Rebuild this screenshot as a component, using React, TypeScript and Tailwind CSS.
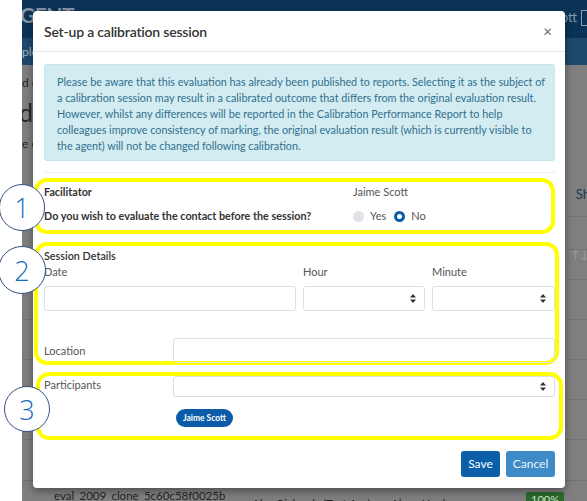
import { ReactNode } from 'react';

function Caret() {
  return (
    <svg width="6" height="9" viewBox="0 0 6 9" className="shrink-0">
      <path d="M3 0 L6 3.5 H0 Z M3 9 L6 5.5 H0 Z" fill="#333" />
    </svg>
  );
}

function SelectBox({ className = '' }: { className?: string }) {
  return (
    <div className={`flex items-center justify-end pr-[8px] bg-white border border-[#dcdfe3] rounded-[3px] ${className}`}>
      <Caret />
    </div>
  );
}

function Marker({ n, className }: { n: string; className: string }) {
  return (
    <div
      className={`absolute flex items-center justify-center rounded-full bg-white border border-[#34507e] text-[#1a6cc4] text-[27px] leading-none ${className}`}
      style={{ fontFamily: '"Open Sans", sans-serif', fontWeight: 300 }}
    >
      {n}
    </div>
  );
}

function Highlight({ children, className = '' }: { children: ReactNode; className?: string }) {
  return <div className={`shrink-0 border-[4px] border-[#ffff00] rounded-[13px] ${className}`}>{children}</div>;
}

const alertLines = [
  'Please be aware that this evaluation has already been published to reports. Selecting it as the subject of',
  'a calibration session may result in a calibrated outcome that differs from the original evaluation result.',
  'However, whilst any differences will be reported in the Calibration Performance Report to help',
  'colleagues improve consistency of marking, the original evaluation result (which is currently visible to',
  'the agent) will not be changed following calibration.',
];

function Background() {
  return (
    <div
      className="flex-1 flex flex-col bg-[#7f7f7f] overflow-hidden"
      style={{ fontFamily: 'Lato, "Open Sans", sans-serif' }}
    >
      {/* top navbar */}
      <div className="h-[38px] shrink-0 bg-[#0b3357] flex items-start justify-between">
        <div className="flex items-baseline gap-[8px] -mt-[1px] -ml-[2px]">
          <span className="text-[21px] font-bold text-[#8595a6] tracking-tight">GENT</span>
          <span className="text-[15px] text-[#6f8296]">Quality</span>
        </div>
        <div className="flex items-center gap-[4px] mt-[8px]">
          <span className="text-[13px] text-[#8e9db0]">ott</span>
          <span className="w-[6px] h-[16px] border border-[#8e9db0] border-r-0" />
        </div>
      </div>
      {/* sub bar */}
      <div className="h-[27px] shrink-0 bg-[#1e496d] flex items-center">
        <span className="text-[12px] text-[#aab6c3]">ple</span>
      </div>
      {/* content */}
      <div className="relative h-[152px] shrink-0 border-b border-[#727272] text-[#262626]">
        <div className="text-[12px] mt-[9px]">d e</div>
        <div className="text-[25px] leading-none mt-[8px] -ml-[3px]">d</div>
        <div className="text-[12px] mt-[10px]">e c</div>
        <div className="absolute right-[-3px] top-[120px] text-[13px] text-[#1b3a58]">Sh</div>
      </div>
      <div className="h-[33px] shrink-0 border-b border-[#727272]" />
      <div className="h-[30px] shrink-0 border-b border-[#727272] flex justify-end items-start">
        <span className="text-[12px] text-[#9a9a9a] mr-[-2px] -mt-[4px]">↑↓</span>
      </div>
      <div className="h-[40px] shrink-0 border-b border-[#727272]" />
      <div className="h-[40px] shrink-0 border-b border-[#727272]" />
      <div className="h-[40px] shrink-0 border-b border-[#727272]" />
      <div className="h-[40px] shrink-0 border-b border-[#727272]" />
      <div className="h-[41px] shrink-0 border-b border-[#727272]" />
      <div className="flex items-start text-[11.5px] text-[#262626] pt-[6px] shrink-0">
        <span className="ml-[32px] w-[198px] whitespace-nowrap">eval_2009_clone_5c60c58f0025b</span>
        <span className="mt-[8px] w-[139px] whitespace-nowrap">Alex Richards (Test Acc)</span>
        <span className="mt-[8px] w-[135px] whitespace-nowrap">Alaya Hughes</span>
        <span className="mt-[5px] bg-[#2c6a2c] text-[#cfe3cf] text-[11px] px-[5px] rounded-[2px]">100%</span>
      </div>
    </div>
  );
}

function Modal() {
  return (
    <div
      className="absolute left-[33px] top-[11px] w-[532px] h-[477px] bg-white rounded-[4px] shadow-[0_3px_9px_rgba(0,0,0,0.4)] flex flex-col"
      style={{ fontFamily: 'Lato, "Open Sans", sans-serif' }}
    >
      {/* header */}
      <div className="h-[41px] shrink-0 border-b border-[#e5e5e5] flex items-center justify-between pl-[11px] pr-[13px]">
        <h2 className="text-[14px] font-semibold tracking-[-0.2px] text-[#333] mt-[1px]">Set-up a calibration session</h2>
        <span className="text-[15px] text-[#666] leading-none">×</span>
      </div>

      <div className="pl-[11px] pr-[10px] pt-[12px] flex flex-col">
        {/* alert */}
        <div className="shrink-0 bg-[#d2ecf1] border border-[#c3e6ec] rounded-[3px] text-[#31708f] text-[10.8px] leading-[16px] pl-[12px] pr-[6px] pt-[9px] pb-[6px]">
          {alertLines.map((line) => (
            <div key={line} className="whitespace-nowrap">
              {line}
            </div>
          ))}
        </div>
        <div className="border-t border-[#eeeeee] mt-[11px]" />

        {/* section 1 */}
        <Highlight className="mt-[5px] -ml-[10px] h-[56px] pl-[6px] text-[10.8px] font-bold text-[#333]">
          <div className="flex h-[18px] items-end">
            <span className="w-[309px]">Facilitator</span>
            <span className="font-normal text-[11px] text-[#555]">Jaime Scott</span>
          </div>
          <div className="flex items-center mt-[8px] h-[16px]">
            <span className="w-[309px]">Do you wish to evaluate the contact before the session?</span>
            <div className="flex items-center font-normal text-[11px] text-[#555]">
              <span className="w-[11px] h-[11px] rounded-full bg-[#dfe2e6]" />
              <span className="ml-[6px]">Yes</span>
              <span className="ml-[8px] w-[11px] h-[11px] rounded-full border-[3px] border-[#0b5ca8] bg-white" />
              <span className="ml-[6px]">No</span>
            </div>
          </div>
        </Highlight>

        {/* section 2 */}
        <Highlight className="mt-[8px] -ml-[10px] -mr-[4px] h-[123px] pl-[6px] text-[#555]">
          <div className="text-[10.8px] font-semibold text-[#333] leading-[16px] mt-[2px]">Session Details</div>
          <div className="grid grid-cols-[252px_122px_1fr] gap-x-[7px]">
            <span className="text-[11px] leading-[16px]">Date</span>
            <span className="text-[11px] leading-[16px]">Hour</span>
            <span className="text-[11px] leading-[16px]">Minute</span>
            <div className="mt-[6px] h-[25px] border border-[#dcdfe3] rounded-[3px]" />
            <SelectBox className="mt-[6px] h-[25px]" />
            <SelectBox className="mt-[6px] h-[25px]" />
          </div>
          <div className="flex items-end mt-[27px]">
            <span className="w-[129px] text-[11px] leading-[16px] mb-[4px]">Location</span>
            <div className="flex-1 h-[25px] border border-[#dcdfe3] rounded-[3px]" />
          </div>
        </Highlight>

        {/* section 3 */}
        <Highlight className="mt-[7px] -ml-[8px] -mr-[8px] h-[68px] pl-[4px] pr-[4px] text-[#555]">
          <div className="flex items-start">
            <span className="w-[129px] text-[11px] leading-[16px] mt-[1px]">Participants</span>
            <SelectBox className="flex-1 h-[21px]" />
          </div>
          <div className="ml-[132px] mt-[12px] w-[57px] h-[18px] rounded-full bg-[#0b5ca8] text-white text-[8.5px] font-bold flex items-center justify-center">
            Jaime Scott
          </div>
        </Highlight>

        {/* footer */}
        <div className="flex justify-end gap-[6px] mt-[11px] shrink-0">
          <button className="w-[39px] h-[26px] rounded-[3px] bg-[#0b5fa8] text-white text-[12px]">Save</button>
          <button className="w-[49px] h-[26px] rounded-[3px] bg-[#3d8ac7] text-[#eaf2fa] text-[12px]">Cancel</button>
        </div>
      </div>
    </div>
  );
}

export default function App() {
  return (
    <div className="relative w-[587px] h-[501px] overflow-hidden flex bg-white">
      <div className="w-[22px] shrink-0 bg-white" />
      <Background />
      <Modal />
      <Marker n="1" className="left-[-1px] top-[184px] w-[46px] h-[47px]" />
      <Marker n="2" className="left-[-2px] top-[246px] w-[48px] h-[48px]" />
      <Marker n="3" className="left-[4px] top-[386px] w-[46px] h-[46px]" />
    </div>
  );
}
